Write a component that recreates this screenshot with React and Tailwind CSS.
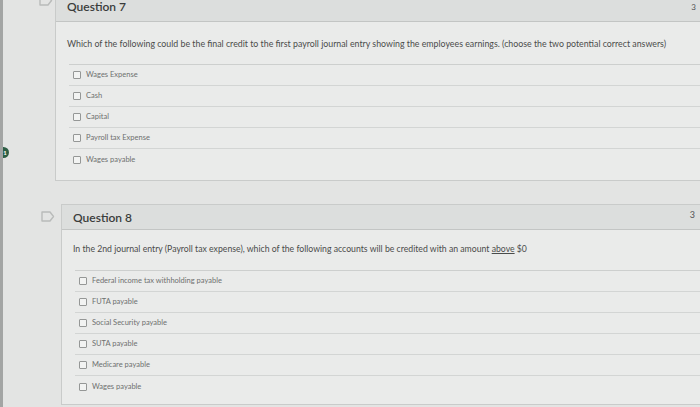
import React from "react";

const q7Options = [
  "Wages Expense",
  "Cash",
  "Capital",
  "Payroll tax Expense",
  "Wages payable",
];

const q8Options = [
  "Federal income tax withholding payable",
  "FUTA payable",
  "Social Security payable",
  "SUTA payable",
  "Medicare payable",
  "Wages payable",
];

function FlagIcon() {
  return (
    <svg width="14" height="11" viewBox="0 0 14 11" fill="none">
      <path
        d="M1 1 H9 L12.5 5.5 L9 10 H1 Z"
        stroke="#b9bbba"
        strokeWidth="1.4"
        strokeLinejoin="round"
      />
    </svg>
  );
}

function Checkbox() {
  return (
    <span className="inline-block w-[8px] h-[8px] border border-[#959796] bg-[#f2f3f2] rounded-[1px] shrink-0" />
  );
}

function OptionRow({ label, last }) {
  return (
    <div
      className={`flex items-center gap-[5px] h-[21px] pl-[4px] ${
        last ? "" : "border-b border-[#d3d5d4]"
      }`}
    >
      <Checkbox />
      <span className="text-[7.5px] text-[#6e706f]">{label}</span>
    </div>
  );
}

export default function App() {
  return (
    <div
      className="relative w-[700px] h-[407px] overflow-hidden bg-[#e3e4e3] border-l-[3px] border-[#a3a5a4]"
      style={{ fontFamily: "Lato, 'Open Sans', sans-serif" }}
    >
      {/* progress badge */}
      <div className="absolute left-[-5px] top-[147px] w-[11px] h-[11px] rounded-full bg-[#2d5e45] flex items-center justify-center">
        <span className="text-[6px] font-bold text-white pl-[3px]">1</span>
      </div>

      <div className="flex flex-col pl-[52px]">
        {/* Question 7 */}
        <div className="relative mt-[-10px] bg-[#eaebea] border-l border-b border-[#c9cbca]">
          <div className="absolute left-[-17px] top-[5px]">
            <FlagIcon />
          </div>
          <div className="flex items-center justify-between h-[32px] pl-[11px] pr-[4px] pt-[2px] bg-[#dcdedd] border-b border-[#c3c5c4]">
            <span className="text-[12px] leading-[12px] font-semibold text-[#3a3c3b]">
              Question 7
            </span>
            <span className="text-[8px] leading-[10px] text-[#555]">3</span>
          </div>
          <div className="pl-[11px] pt-[17px] pb-[10px]">
            <p className="text-[8.8px] text-[#4a4c4b] leading-[10px] mb-[15px] whitespace-nowrap">
              Which of the following could be the final credit to the first
              payroll journal entry showing the employees earnings. (choose the
              two potential correct answers)
            </p>
            <div className="border-t border-[#cdcfce] ml-[2px]">
              {q7Options.map((o, i) => (
                <OptionRow key={o} label={o} last={i === q7Options.length - 1} />
              ))}
            </div>
          </div>
        </div>

        {/* Question 8 */}
        <div className="relative mt-[23px] ml-[6px] bg-[#eaebea] border-l border-t border-b border-[#c9cbca]">
          <div className="absolute left-[-21px] top-[6px]">
            <FlagIcon />
          </div>
          <div className="flex items-center justify-between h-[25px] pl-[11px] pr-[5px] bg-[#dcdedd] border-b border-[#c3c5c4]">
            <span className="text-[12px] font-semibold text-[#3a3c3b] pt-[1px]">
              Question 8
            </span>
            <span className="text-[9px] text-[#555] mb-[5px]">3</span>
          </div>
          <div className="pl-[11px] pt-[14px] pb-[7px]">
            <p className="text-[8.7px] text-[#4a4c4b] leading-[10px] mb-[16px] whitespace-nowrap">
              In the 2nd journal entry (Payroll tax expense), which of the
              following accounts will be credited with an amount{" "}
              <span className="underline">above</span> $0
            </p>
            <div className="border-t border-[#cdcfce] ml-[2px]">
              {q8Options.map((o, i) => (
                <OptionRow key={o} label={o} last={i === q8Options.length - 1} />
              ))}
            </div>
          </div>
        </div>
      </div>
    </div>
  );
}
